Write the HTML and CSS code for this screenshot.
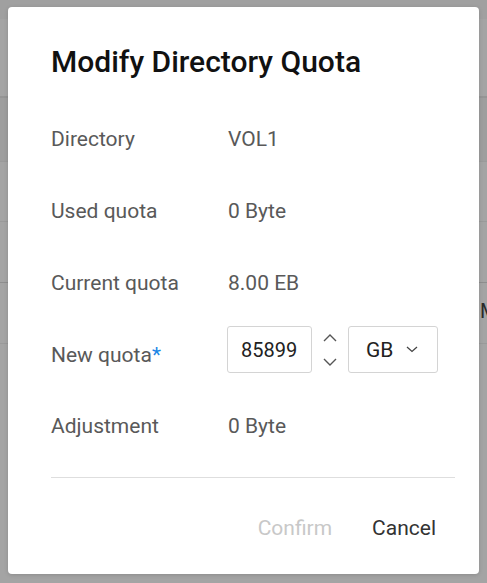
FILE: index.html
```html
<!DOCTYPE html>
<html>
<head>
<meta charset="utf-8">
<link rel="stylesheet" href="styles.css">
</head>
<body>
<div class="bg">
  <div class="bg-row bg-top"></div>
  <div class="bg-row bg-head"></div>
  <div class="bg-row bg-band"></div>
  <div class="bg-row bg-r1"></div>
  <div class="bg-row bg-r2"></div>
  <div class="bg-row bg-r3"><span class="bg-text">M</span></div>
  <div class="bg-row bg-rest"></div>
</div>

<div class="dialog">
  <h1 class="title">Modify Directory Quota</h1>
  <div class="rows">
    <div class="row">
      <div class="label">Directory</div>
      <div class="value">VOL1</div>
    </div>
    <div class="row">
      <div class="label">Used quota</div>
      <div class="value">0 Byte</div>
    </div>
    <div class="row">
      <div class="label">Current quota</div>
      <div class="value">8.00 EB</div>
    </div>
    <div class="row row-form">
      <div class="label">New quota<span class="req">*</span></div>
      <div class="controls">
        <input class="num" type="text" value="85899">
        <div class="spin">
          <svg class="chev" width="14" height="8" viewBox="0 0 14 8"><path d="M1 7 L7 1 L13 7" fill="none" stroke="#555" stroke-width="1.4"/></svg>
          <svg class="chev" width="14" height="8" viewBox="0 0 14 8"><path d="M1 1 L7 7 L13 1" fill="none" stroke="#555" stroke-width="1.4"/></svg>
        </div>
        <div class="select">
          <span class="sel-text">GB</span>
          <svg class="sel-chev" width="12" height="7" viewBox="0 0 12 7"><path d="M1 1 L6 5.5 L11 1" fill="none" stroke="#444" stroke-width="1.3"/></svg>
        </div>
      </div>
    </div>
    <div class="row">
      <div class="label">Adjustment</div>
      <div class="value">0 Byte</div>
    </div>
  </div>
  <div class="divider"></div>
  <div class="actions">
    <button class="btn btn-disabled">Confirm</button>
    <button class="btn">Cancel</button>
  </div>
</div>
</body>
</html>
```
FILE: styles.css
```css
html, body {
  margin: 0;
  padding: 0;
}
body {
  width: 487px;
  height: 583px;
  overflow: hidden;
  background: #a4a4a4;
  font-family: Roboto, "Liberation Sans", sans-serif;
  position: relative;
}
.bg {
  display: flex;
  flex-direction: column;
}
.bg-row {
  box-sizing: border-box;
}
.bg-top {
  height: 19px;
  background: #a0a0a0;
}
.bg-head {
  height: 77px;
  background: #a4a4a4;
}
.bg-band {
  height: 65px;
  background: #9e9e9e;
  border-top: 2px solid #959595;
}
.bg-r1 {
  height: 60px;
  border-top: 1px solid #9a9a9a;
}
.bg-r2 {
  height: 61px;
  border-top: 1px solid #9a9a9a;
}
.bg-r3 {
  height: 61px;
  border-top: 1px solid #8e8e8e;
  display: flex;
  align-items: center;
  padding-left: 480px;
  overflow: hidden;
}
.bg-rest {
  border-top: 1px solid #9a9a9a;
  height: 240px;
}
.bg-text {
  font-size: 20px;
  color: #2a2a2a;
  margin-top: -4px;
}

.dialog {
  position: absolute;
  left: 8px;
  top: 7px;
  width: 471px;
  height: 567px;
  box-sizing: border-box;
  background: #fff;
  border-radius: 4px;
  box-shadow: 0 1px 4px rgba(0,0,0,0.15);
  padding: 39px 24px 0 43px;
}
.title {
  margin: 0;
  font-size: 30px;
  line-height: 32px;
  font-weight: 500;
  color: #111;
}
.rows {
  margin-top: 25px;
  display: flex;
  flex-direction: column;
}
.row {
  height: 72px;
  display: flex;
  align-items: center;
}
.row-form {
  height: 71px;
}
.label {
  width: 177px;
  flex: none;
  font-size: 21px;
  line-height: 24px;
  color: #595959;
}
.value {
  font-size: 21px;
  line-height: 24px;
  color: #595959;
}
.req {
  color: #1a86e6;
}
.controls {
  display: flex;
  align-items: stretch;
  margin-left: -1px;
  margin-bottom: 10px;
  height: 47px;
}
.num {
  box-sizing: border-box;
  width: 85px;
  height: 47px;
  border: 1px solid #d4d4d4;
  border-radius: 3px;
  padding: 0 0 0 13px;
  margin: 0;
  font-family: Roboto, "Liberation Sans", sans-serif;
  font-size: 20px;
  color: #222;
  outline: none;
  background: #fff;
}
.spin {
  width: 36px;
  display: flex;
  flex-direction: column;
  align-items: center;
  justify-content: center;
  gap: 16px;
}
.chev {
  display: block;
}
.select {
  box-sizing: border-box;
  width: 90px;
  height: 47px;
  border: 1px solid #d4d4d4;
  border-radius: 3px;
  display: flex;
  align-items: center;
  padding-left: 17px;
}
.sel-text {
  font-size: 21px;
  color: #222;
}
.sel-chev {
  margin-left: 13px;
  display: block;
}
.divider {
  margin-top: 15px;
  height: 1px;
  background: #dedede;
}
.actions {
  margin-top: 30px;
  display: flex;
  justify-content: flex-end;
}
.btn {
  height: 40px;
  padding: 0 20px;
  margin: 0;
  border: none;
  background: transparent;
  font-family: Roboto, "Liberation Sans", sans-serif;
  font-size: 21px;
  color: #333;
  cursor: pointer;
}
.btn:last-child {
  padding-right: 19px;
}
.btn-disabled {
  color: #c8c8c8;
}
```
